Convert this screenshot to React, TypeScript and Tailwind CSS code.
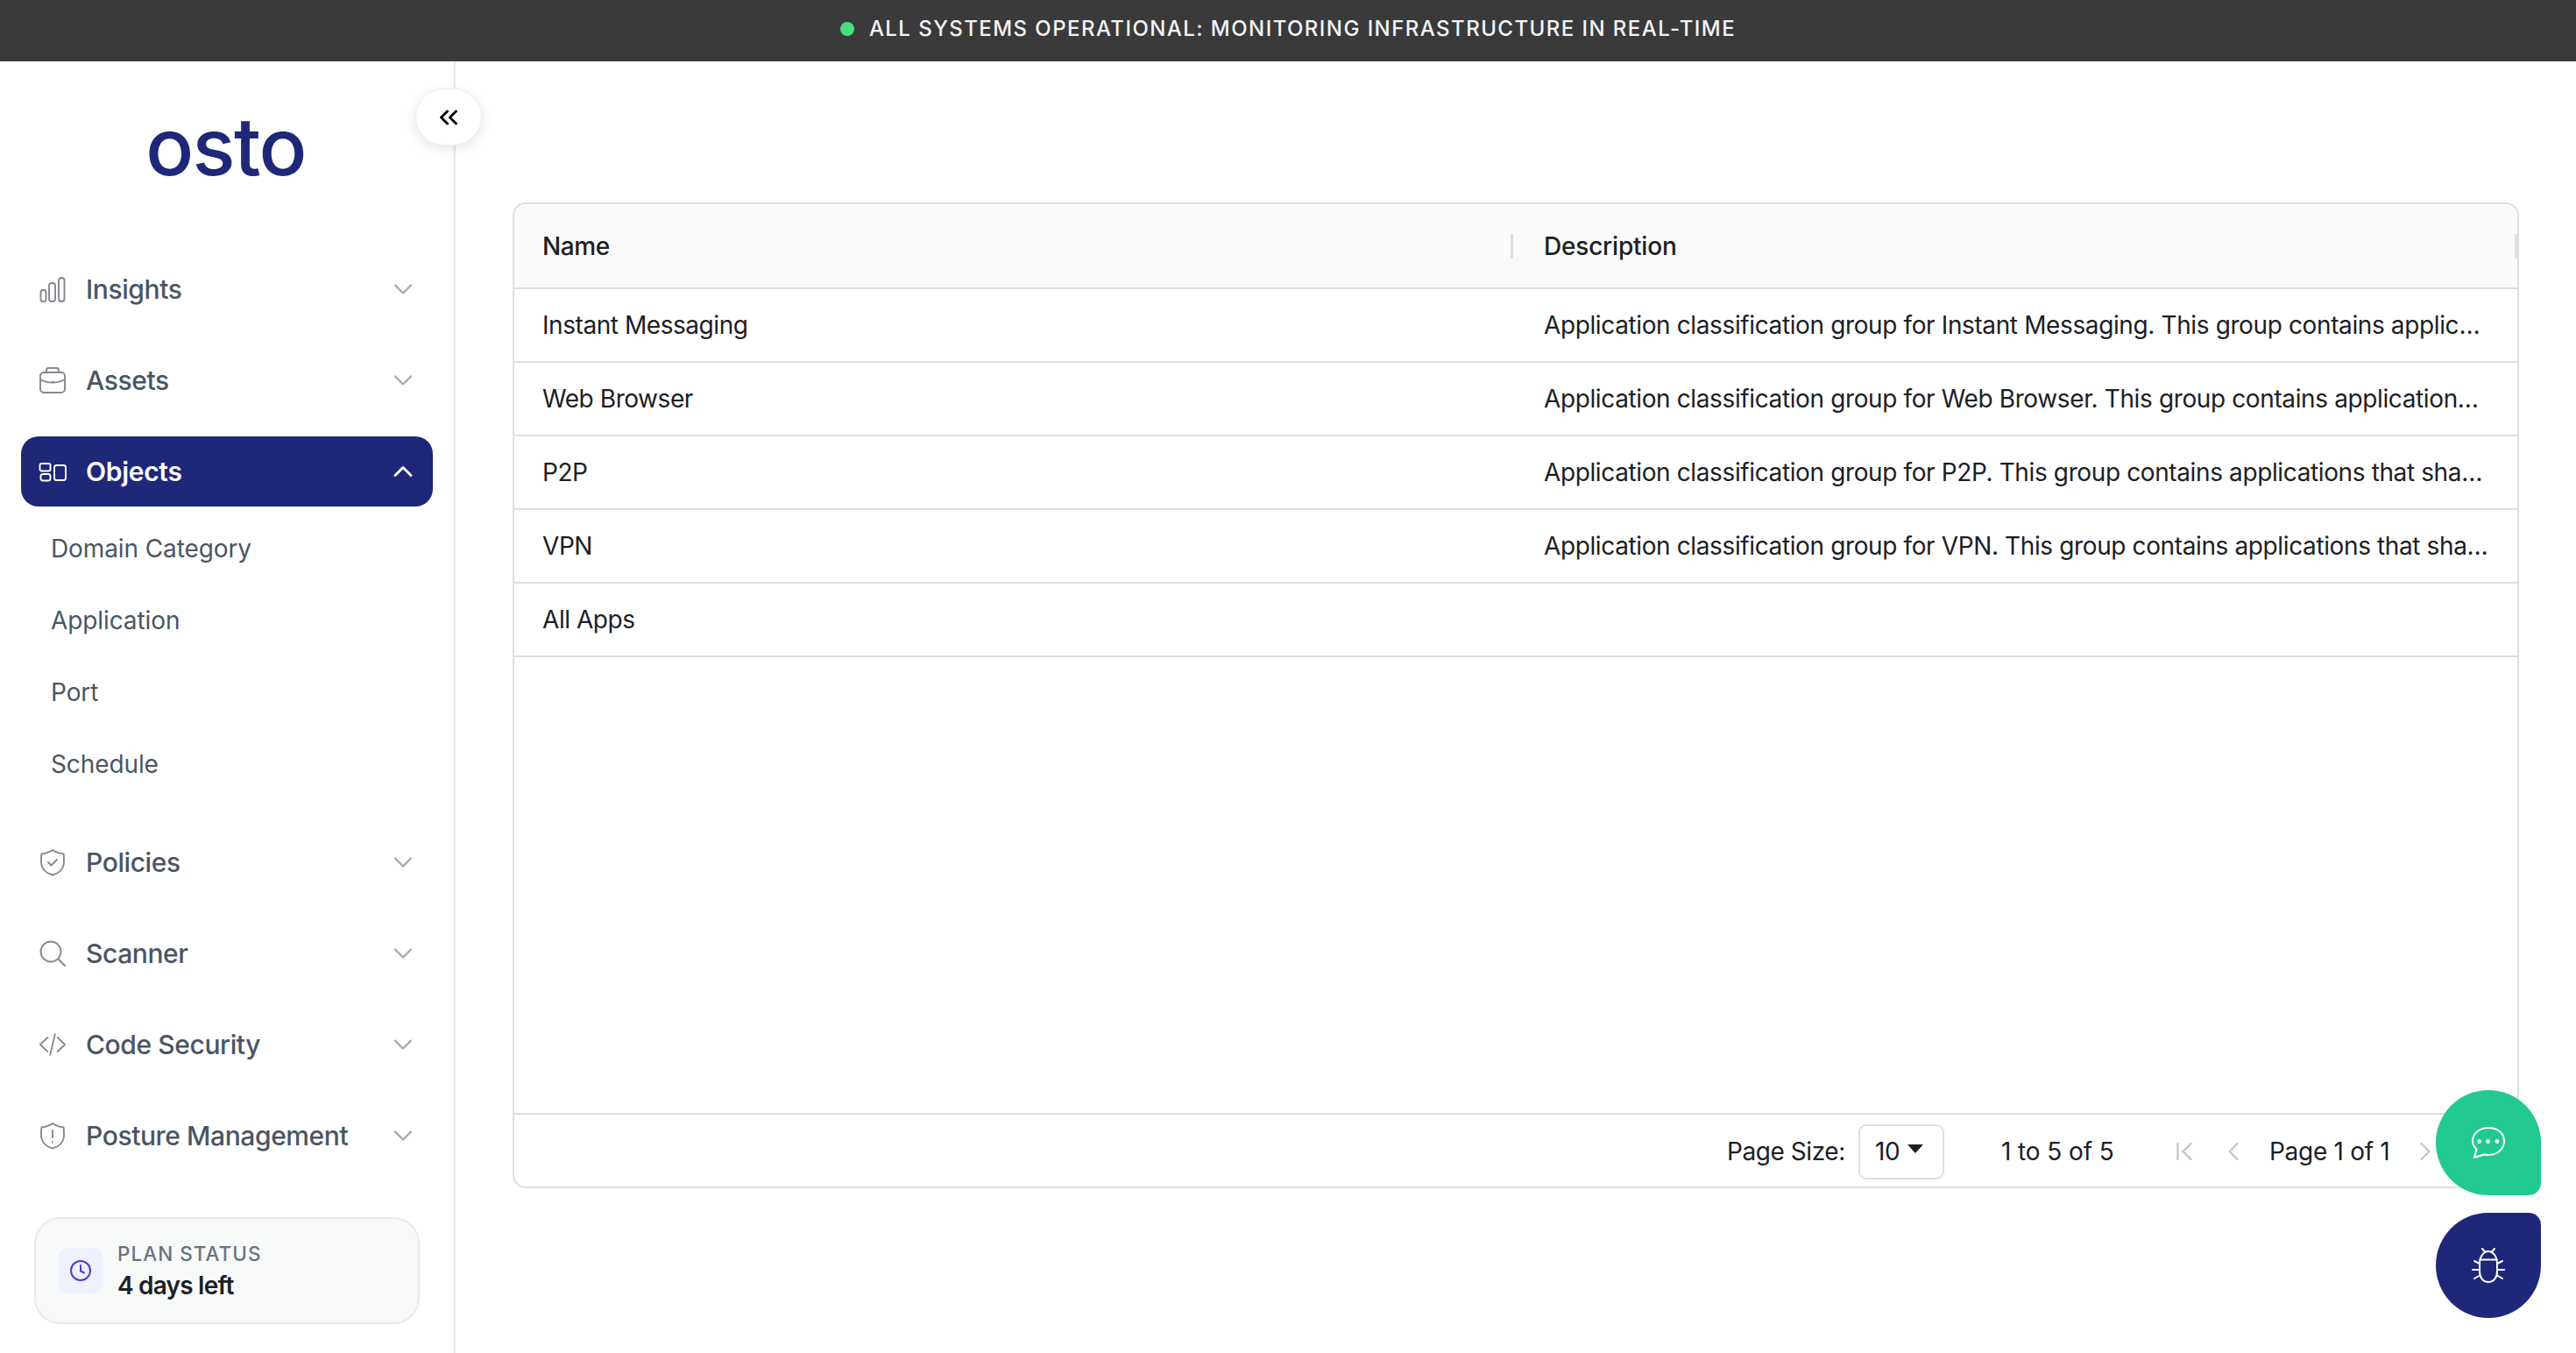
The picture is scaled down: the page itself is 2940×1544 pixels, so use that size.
import React from 'react';
import { ChevronDown, ChevronUp, ChevronsLeft, ChevronFirst, ChevronLeft, ChevronRight } from 'lucide-react';

const iconProps = {
  width: 32,
  height: 32,
  viewBox: '0 0 32 32',
  fill: 'none',
  stroke: 'currentColor',
  strokeWidth: 1.9,
  strokeLinecap: 'round' as const,
  strokeLinejoin: 'round' as const,
};

const shieldPath = 'M16 2c3.500 2.500 8 4 12.500 4.500.500 1 .500 8 .500 9 0 8-6 13-13 15C9 28.500 3 23.500 3 15.500c0-1 0-8 .500-9C8 6 12.500 4.500 16 2Z';

const InsightsIcon = () => (
  <svg {...iconProps}>
    <rect x="2.500" y="17" width="6" height="13" rx="2.500" />
    <rect x="12" y="9" width="7" height="21" rx="3" />
    <rect x="23" y="3" width="6.500" height="27" rx="3" />
  </svg>
);

const AssetsIcon = () => (
  <svg {...iconProps}>
    <rect x="2" y="7" width="28" height="23" rx="4" />
    <path d="M9 7V4.500A2.500 2.500 0 0 1 11.500 2h9A2.500 2.500 0 0 1 23 4.500V7" />
    <path d="M2 15c4 2.500 9 3.500 14 3.500S26 17.500 30 15" />
    <path d="M16 17.500v.5" />
  </svg>
);

const ObjectsIcon = () => (
  <svg {...iconProps}>
    <rect x="1.500" y="7" width="12" height="8.500" rx="2" />
    <rect x="2.500" y="19" width="11" height="7.500" rx="2.500" />
    <rect x="18" y="9" width="13" height="17" rx="2.500" />
  </svg>
);

const PoliciesIcon = () => (
  <svg {...iconProps}>
    <path d={shieldPath} />
    <path d="m11 16 3.500 3.500 6.500-6.500" />
  </svg>
);

const ScannerIcon = () => (
  <svg {...iconProps}>
    <circle cx="14" cy="14" r="11.500" />
    <path d="m23 23 7 7" />
  </svg>
);

const CodeIcon = () => (
  <svg width="34" height="32" viewBox="0 0 34 32" fill="none" stroke="currentColor" strokeWidth="1.900" strokeLinecap="round" strokeLinejoin="round">
    <path d="M11 7.500 2 16l9 8.500" />
    <path d="m23 7.500 9 8.500-9 8.500" />
    <path d="M20 3.500 14 28.500" />
  </svg>
);

const PostureIcon = () => (
  <svg {...iconProps}>
    <path d={shieldPath} />
    <path d="M16 10v8" />
    <path d="M16 23v.500" />
  </svg>
);

const ClockIcon = () => (
  <svg width="26" height="26" viewBox="0 0 26 26" fill="none" stroke="currentColor" strokeWidth="2" strokeLinecap="round" strokeLinejoin="round">
    <circle cx="13" cy="13" r="11" />
    <path d="M13 7v6.500l4 2" />
  </svg>
);

const ChatIcon = () => (
  <svg width="40" height="38" viewBox="0 0 40 38" fill="none" stroke="currentColor" strokeWidth="2" strokeLinecap="round" strokeLinejoin="round">
    <path d="M20 2C9.500 2 2 9 2 17c0 4 2 7 4.500 9.500L4 36l11-3.500c1.600.300 3.300.500 5 .500 10.500 0 18-7 18-16S30.500 2 20 2Z" />
    <circle cx="9.500" cy="17.500" r="2.400" fill="currentColor" stroke="none" />
    <circle cx="19.500" cy="17.500" r="2.400" fill="currentColor" stroke="none" />
    <circle cx="30" cy="17.500" r="2.400" fill="currentColor" stroke="none" />
  </svg>
);

const BugIcon = () => (
  <svg width="38" height="40" viewBox="0 0 38 40" fill="none" stroke="currentColor" strokeWidth="2" strokeLinecap="round" strokeLinejoin="round">
    <path d="M9 17C9 11 13 4 19 4s10 7 10 13v10c0 7-4 12-10 12S9 34 9 27Z" />
    <path d="M9.500 13.500h19" />
    <path d="m12 1 3 3.500" />
    <path d="m26 1-3 3.500" />
    <path d="m3 15 6 3" />
    <path d="M1 25h8" />
    <path d="m3 35 6-3.500" />
    <path d="m35 15-6 3" />
    <path d="M37 25h-8" />
    <path d="m35 35-6-3.500" />
  </svg>
);

interface NavItemProps {
  label: string;
  icon: React.ReactNode;
}

const NavItem: React.FC<NavItemProps> = ({ label, icon }) => (
  <div className="flex h-[80px] items-center pl-[20px] pr-[16px] text-[#4b5563]">
    <span className="flex w-[32px] justify-center text-[#85898f]">{icon}</span>
    <span className="ml-[22px] flex-1 text-[30px] font-medium tracking-[-0.4px]">{label}</span>
    <ChevronDown size={36} strokeWidth={1.500} className="text-[#a3a7ad]" />
  </div>
);

const subItems = ['Domain Category', 'Application', 'Port', 'Schedule'];

const rows = [
  { name: 'Instant Messaging', description: 'Application classification group for Instant Messaging. This group contains applications that share common characteristics.' },
  { name: 'Web Browser', description: 'Application classification group for Web Browser. This group contains applications that share common characteristics.' },
  { name: 'P2P', description: 'Application classification group for P2P. This group contains applications that share common characteristics.' },
  { name: 'VPN', description: 'Application classification group for VPN. This group contains applications that share common characteristics.' },
  { name: 'All Apps', description: '' },
];

const App: React.FC = () => {
  return (
    <div className="relative flex h-[1544px] w-[2940px] flex-col overflow-hidden bg-white font-['Inter',sans-serif] text-[#1c2024]">
      <div className="flex h-[70px] shrink-0 items-center justify-center bg-[#3a3a3a] pb-[5px] text-[24px] font-medium tracking-[0.06em] text-[#f3f4f6]">
        <span className="mr-[17px] h-[16px] w-[16px] rounded-full bg-[#4ade80]" />
        ALL SYSTEMS OPERATIONAL: MONITORING INFRASTRUCTURE IN REAL-TIME
      </div>

      <div className="flex flex-1">
        <aside className="relative flex w-[520px] shrink-0 flex-col border-r-2 border-[#e8e9eb] px-[24px]">
          <button className="absolute left-[474px] top-[31px] flex h-[65px] w-[76px] items-center justify-center rounded-full border border-[#efefef] bg-white text-black shadow-[0_4px_14px_rgba(0,0,0,0.10)]">
            <ChevronsLeft size={34} strokeWidth={2} />
          </button>

          <div className="flex h-[220px] items-center justify-center pb-[26px] pr-[3px]">
            <span className="text-[91px] font-medium leading-none tracking-[-0.018em] text-[#1e2778]">osto</span>
          </div>

          <nav className="flex flex-col gap-[24px]">
            <NavItem label="Insights" icon={<InsightsIcon />} />
            <NavItem label="Assets" icon={<AssetsIcon />} />
            <div className="flex h-[80px] items-center rounded-[20px] bg-[#1e2778] pl-[20px] pr-[16px] text-white">
              <span className="flex w-[32px] justify-center"><ObjectsIcon /></span>
              <span className="ml-[22px] flex-1 text-[30px] font-semibold tracking-[-0.3px]">Objects</span>
              <ChevronUp size={36} strokeWidth={2} />
            </div>
          </nav>

          <div className="mt-[7px] flex flex-col">
            {subItems.map(item => (
              <div key={item} className="flex h-[82px] items-center pl-[34px] text-[28px] tracking-[-0.1px] text-[#4b5563]">{item}</div>
            ))}
          </div>

          <nav className="mt-[31px] flex flex-col gap-[24px]">
            <NavItem label="Policies" icon={<PoliciesIcon />} />
            <NavItem label="Scanner" icon={<ScannerIcon />} />
            <NavItem label="Code Security" icon={<CodeIcon />} />
            <NavItem label="Posture Management" icon={<PostureIcon />} />
          </nav>

          <div className="mx-[15px] mt-[53px] flex h-[122px] items-center rounded-[30px] border-2 border-[#e8eaec] bg-[#f8fafa] pl-[25px]">
            <span className="flex h-[52px] w-[52px] items-center justify-center rounded-[12px] bg-[#eef0fd] text-[#4343c8]"><ClockIcon /></span>
            <div className="ml-[16px] flex flex-col">
              <span className="text-[22.500px] font-medium leading-[34px] tracking-[0.045em] text-[#6b7280]">PLAN STATUS</span>
              <span className="text-[28px] font-semibold leading-[38px] tracking-[-0.8px] text-[#1c2024]">4 days left</span>
            </div>
          </div>
        </aside>

        <main className="flex-1 pl-[65px] pr-[65px] pt-[161px]">
          <div className="flex h-[1125px] flex-col rounded-[15px] border-2 border-[#dfdfdf] text-[28px] tracking-[-0.44px]">
            <div className="grid h-[97px] shrink-0 grid-cols-[1140px_1fr] rounded-t-[15px] border-b-2 border-[#dfdfdf] bg-[#fafafa] font-medium">
              <div className="relative flex items-center pl-[32px]">
                Name
                <span className="absolute right-0 top-[34px] h-[28px] w-[3px] bg-[#dfdfdf]" />
              </div>
              <div className="relative flex items-center pl-[35px] tracking-[-0.2px]">
                Description
                <span className="absolute right-0 top-[34px] h-[28px] w-[3px] bg-[#dfdfdf]" />
              </div>
            </div>
            {rows.map(row => (
              <div key={row.name} className="grid h-[84px] shrink-0 grid-cols-[1140px_1fr] items-center border-b-2 border-[#dfdfdf]">
                <div className="pl-[32px]">{row.name}</div>
                <div className="truncate pl-[35px] pr-[30px] tracking-[-0.38px]">{row.description}</div>
              </div>
            ))}
            <div className="flex-1" />
            <div className="flex h-[84px] shrink-0 items-center border-t-2 border-[#dfdfdf] pl-[1384px] pt-[2px]">
              <span className="w-[133px] whitespace-nowrap">Page Size:</span>
              <span className="ml-[17px] flex h-[63px] w-[98px] items-center rounded-[9px] border-2 border-[#dfdfdf] pl-[17px]">
                10
                <svg width="18" height="10" viewBox="0 0 18 10" className="mb-[6px] ml-[9px]"><path d="M0 0h18L9 10Z" fill="#1c2024" /></svg>
              </span>
              <span className="ml-[65px] w-[191px] tracking-[-0.1px]">1 to 5 of 5</span>
              <ChevronFirst size={36} strokeWidth={1.500} className="text-[#c4c4c4]" />
              <ChevronLeft size={36} strokeWidth={1.500} className="ml-[20px] text-[#c4c4c4]" />
              <span className="ml-[23px] w-[160px] tracking-[-0.3px]">Page 1 of 1</span>
              <ChevronRight size={36} strokeWidth={1.500} className="text-[#c4c4c4]" />
            </div>
          </div>
        </main>
      </div>

      <button className="absolute left-[2780px] top-[1244px] flex h-[120px] w-[120px] items-center justify-center rounded-[60px] rounded-br-[14px] bg-[#22c993] text-white">
        <ChatIcon />
      </button>
      <button className="absolute left-[2780px] top-[1384px] flex h-[120px] w-[120px] items-center justify-center rounded-[60px] rounded-tr-[14px] bg-[#1e2778] text-white">
        <BugIcon />
      </button>
    </div>
  );
};

export default App;
